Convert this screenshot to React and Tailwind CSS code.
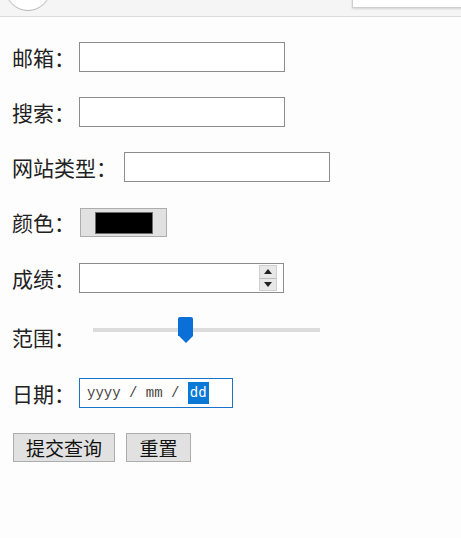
import React from 'react';

const Label = ({ children }) => (
    <span className="text-[21px] leading-none text-[#222] whitespace-nowrap">{children}</span>
);

const Row = ({ children, className = 'h-[30px]' }) => (
    <div className={`flex items-center ${className}`}>{children}</div>
);

export default function App() {
    return (
        <div className="w-[461px] h-[538px] bg-[#fdfdfd] overflow-hidden" style={{ fontFamily: '"Noto Sans CJK SC", "Liberation Sans", sans-serif' }}>
            {/* browser chrome strip */}
            <div className="relative h-[17px] bg-[#f5f5f5] border-b border-[#dcdcdc] overflow-hidden">
                <div className="absolute left-[5px] top-[-35px] w-[46px] h-[46px] rounded-full border border-[#b5b5b5] bg-white" />
                <div className="absolute left-[352px] top-[-10px] w-[120px] h-[18px] border border-[#cfcfcf] bg-white shadow-[0_1px_2px_rgba(0,0,0,0.15)]" />
            </div>

            <div className="flex flex-col gap-[25px] pl-[12px] pt-[25px]">
                <Row>
                    <Label>邮箱：</Label>
                    <div className="ml-[4px] w-[206px] h-[30px] border border-[#8c8c8c] bg-white" />
                </Row>
                <Row>
                    <Label>搜索：</Label>
                    <div className="ml-[4px] w-[206px] h-[30px] border border-[#8c8c8c] bg-white" />
                </Row>
                <Row>
                    <Label>网站类型：</Label>
                    <div className="ml-[7px] w-[206px] h-[30px] border border-[#8c8c8c] bg-white" />
                </Row>
                <Row className="h-[31px]">
                    <Label>颜色：</Label>
                    <div className="ml-[5px] w-[87px] h-[29px] border border-[#adadad] bg-[#e1e1e1] flex items-center justify-center">
                        <div className="w-[58px] h-[22px] border border-[#6d6d6d] bg-black" />
                    </div>
                </Row>
                <Row>
                    <Label>成绩：</Label>
                    <div className="ml-[4px] w-[205px] h-[30px] border border-[#8c8c8c] bg-white flex items-center justify-end pr-[6px]">
                        <div className="w-[18px] h-[26px] bg-[#e8e8e8] border border-[#d0d0d0] flex flex-col">
                            <div className="flex-1 flex items-center justify-center border-b border-[#bdbdbd]">
                                <div className="w-0 h-0 border-l-[4px] border-r-[4px] border-b-[5px] border-l-transparent border-r-transparent border-b-[#222]" />
                            </div>
                            <div className="flex-1 flex items-center justify-center">
                                <div className="w-0 h-0 border-l-[4px] border-r-[4px] border-t-[5px] border-l-transparent border-r-transparent border-t-[#222]" />
                            </div>
                        </div>
                    </div>
                </Row>
                <Row className="h-[35px] items-start">
                    <div className="pt-[9px]">
                        <Label>范围：</Label>
                    </div>
                    <div className="relative ml-[18px] mt-[-1px] w-[227px] h-[26px] flex items-center">
                        <div className="w-full h-[4px] bg-[#dcdcdc]" />
                        <div className="absolute left-[85px] top-0 w-[15px] h-[26px] flex flex-col items-center">
                            <div className="w-[15px] h-[19px] bg-[#0a6fd6] rounded-t-[2px]" />
                            <div className="w-0 h-0 border-l-[7.5px] border-r-[7.5px] border-t-[7px] border-l-transparent border-r-transparent border-t-[#0a6fd6]" />
                        </div>
                    </div>
                </Row>
                <Row>
                    <Label>日期：</Label>
                    <div className="ml-[4px] w-[154px] h-[30px] border border-[#1b72c8] bg-white flex items-center pl-[7px] text-[14px] text-[#4a4440] whitespace-pre" style={{ fontFamily: '"Liberation Mono", "DejaVu Sans Mono", monospace' }}>
                        <span>yyyy / mm / </span>
                        <span className="bg-[#0a78d7] text-white px-[2px] leading-[22px]">dd</span>
                    </div>
                </Row>
                <div className="flex items-center gap-[11px] ml-[1px]">
                    <button className="w-[102px] h-[29px] bg-[#e1e1e1] border border-[#adadad] text-[19px] leading-none text-[#111]">提交查询</button>
                    <button className="w-[65px] h-[29px] bg-[#e1e1e1] border border-[#adadad] text-[19px] leading-none text-[#111]">重置</button>
                </div>
            </div>
        </div>
    );
}
